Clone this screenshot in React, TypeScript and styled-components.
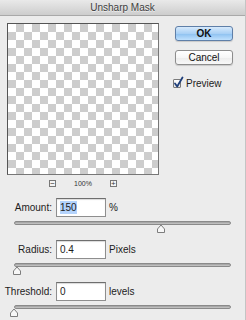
import styled, { createGlobalStyle } from "styled-components";

const GlobalStyle = createGlobalStyle`
  html, body {
    margin: 0;
    padding: 0;
    background: #ececec;
  }
  body {
    font-family: "Liberation Sans", Arial, sans-serif;
    font-size: 10px;
    color: #1c1c1c;
  }
`;

const Window = styled.div`
  width: 246px;
  height: 320px;
  background: #ececec;
  box-sizing: border-box;
  border-right: 1px solid #c4c4c4;
  overflow: hidden;
`;

const TitleBar = styled.div`
  height: 16px;
  display: flex;
  align-items: center;
  justify-content: center;
  background: linear-gradient(#e9e9e9, #cdcdcd);
  border-bottom: 1px solid #a9a9a9;
  box-sizing: border-box;
  color: #404040;
  font-size: 10px;
  text-shadow: 0 1px 0 rgba(255, 255, 255, 0.6);
`;

const Top = styled.div`
  display: flex;
`;

const PreviewColumn = styled.div`
  margin: 7px 0 0 7px;
  display: flex;
  flex-direction: column;
  align-items: center;
`;

const Checker = styled.div`
  width: 152px;
  height: 152px;
  box-sizing: border-box;
  border: 1px solid #555;
  border-right-color: #777;
  border-bottom-color: #777;
  background: repeating-conic-gradient(#cdcdcd 0 25%, #ffffff 0 50%) 0 0 / 16px 16px;
`;

const ZoomBar = styled.div`
  margin-top: 4px;
  width: 152px;
  display: flex;
  align-items: center;
  justify-content: center;
  gap: 18px;
  height: 9px;
`;

const ZoomBox = styled.div`
  width: 7px;
  height: 7px;
  box-sizing: border-box;
  border: 1px solid #777;
  background: #f4f4f4;
  display: flex;
  align-items: center;
  justify-content: center;
  font-size: 8px;
  line-height: 1;
  color: #333;
`;

const ZoomLabel = styled.span`
  font-size: 7px;
  color: #333;
`;

const ButtonColumn = styled.div`
  margin: 10px 0 0 16px;
  display: flex;
  flex-direction: column;
  align-items: flex-start;
`;

const Button = styled.div<{ $primary?: boolean }>`
  width: 58px;
  height: 15px;
  box-sizing: border-box;
  border-radius: 3px;
  display: flex;
  align-items: center;
  justify-content: center;
  font-size: 10px;
  font-weight: ${(p) => (p.$primary ? "bold" : "normal")};
  color: #111;
  border: 1px solid ${(p) => (p.$primary ? "#5f7fa8" : "#8d8d8d")};
  background: ${(p) =>
    p.$primary
      ? "linear-gradient(#d7eafc 0%, #a9d0f5 50%, #8cc0f0 51%, #bfe0fd 100%)"
      : "linear-gradient(#ffffff 0%, #f6f6f6 50%, #ececec 51%, #f8f8f8 100%)"};
  box-shadow: 0 1px 1px rgba(0, 0, 0, 0.15);
  & + & {
    margin-top: 9px;
  }
`;

const CheckRow = styled.div`
  margin-top: 13px;
  margin-left: -2px;
  display: flex;
  align-items: center;
  gap: 5px;
  font-size: 10px;
`;

const CheckBox = styled.div`
  width: 8px;
  height: 9px;
  box-sizing: border-box;
  border: 1px solid #7a7a7a;
  border-radius: 1px;
  background: linear-gradient(#ffffff, #e4e4e4);
  position: relative;
  & svg {
    position: absolute;
    left: -1px;
    top: -4px;
  }
`;

const Params = styled.div`
  margin-top: 10px;
  display: flex;
  flex-direction: column;
`;

const Row = styled.div`
  height: 19px;
  display: flex;
  align-items: center;
`;

const Label = styled.div`
  width: 56px;
  text-align: right;
  padding-right: 4px;
  box-sizing: border-box;
`;

const Field = styled.div`
  width: 50px;
  height: 19px;
  box-sizing: border-box;
  border: 1px solid #8e8e8e;
  border-top-color: #6e6e6e;
  background: #fff;
  box-shadow: inset 0 1px 1px rgba(0, 0, 0, 0.15);
  display: flex;
  align-items: center;
  padding-left: 3px;
`;

const Value = styled.span<{ $selected?: boolean }>`
  background: ${(p) => (p.$selected ? "#b4d3fc" : "transparent")};
  padding: 1px 0;
`;

const Unit = styled.div`
  margin-left: 3px;
`;

const SliderBlock = styled.div`
  height: 23px;
  box-sizing: border-box;
  padding-top: 4px;
  position: relative;
  margin-left: 14px;
  width: 217px;
`;

const Track = styled.div`
  height: 4px;
  box-sizing: border-box;
  border: 1px solid #8a8a8a;
  border-radius: 2px;
  background: linear-gradient(#9d9d9d, #c9c9c9);
`;

const Thumb = styled.svg`
  position: absolute;
  top: 7px;
  margin-left: -5px;
`;

function Slider({ at }: { at: number }) {
  return (
    <SliderBlock>
      <Track />
      <Thumb width="10" height="9" viewBox="0 0 10 9" style={{ left: at }}>
        <path
          d="M1.5 8.5 L1.5 5 L5 1 L8.5 5 L8.5 8.5 Z"
          fill="#f7f7f7"
          stroke="#7d7d7d"
          strokeWidth="1"
          strokeLinejoin="round"
        />
      </Thumb>
    </SliderBlock>
  );
}

const params = [
  { label: "Amount:", value: "150", unit: "%", at: 147, selected: true },
  { label: "Radius:", value: "0.4", unit: "Pixels", at: 3 },
  { label: "Threshold:", value: "0", unit: "levels", at: 0 },
];

export default function App() {
  return (
    <>
      <GlobalStyle />
      <Window>
        <TitleBar>Unsharp Mask</TitleBar>
        <Top>
          <PreviewColumn>
            <Checker />
            <ZoomBar>
              <ZoomBox>−</ZoomBox>
              <ZoomLabel>100%</ZoomLabel>
              <ZoomBox>+</ZoomBox>
            </ZoomBar>
          </PreviewColumn>
          <ButtonColumn>
            <Button $primary>OK</Button>
            <Button>Cancel</Button>
            <CheckRow>
              <CheckBox>
                <svg width="11" height="12" viewBox="0 0 11 12">
                  <path
                    d="M2 7.5 L4.2 10.5 L9.5 1.5"
                    fill="none"
                    stroke="#1f3f7a"
                    strokeWidth="1.8"
                    strokeLinecap="round"
                    strokeLinejoin="round"
                  />
                </svg>
              </CheckBox>
              Preview
            </CheckRow>
          </ButtonColumn>
        </Top>
        <Params>
          {params.map((p) => (
            <div key={p.label}>
              <Row>
                <Label>{p.label}</Label>
                <Field>
                  <Value $selected={p.selected}>{p.value}</Value>
                </Field>
                <Unit>{p.unit}</Unit>
              </Row>
              <Slider at={p.at} />
            </div>
          ))}
        </Params>
      </Window>
    </>
  );
}
